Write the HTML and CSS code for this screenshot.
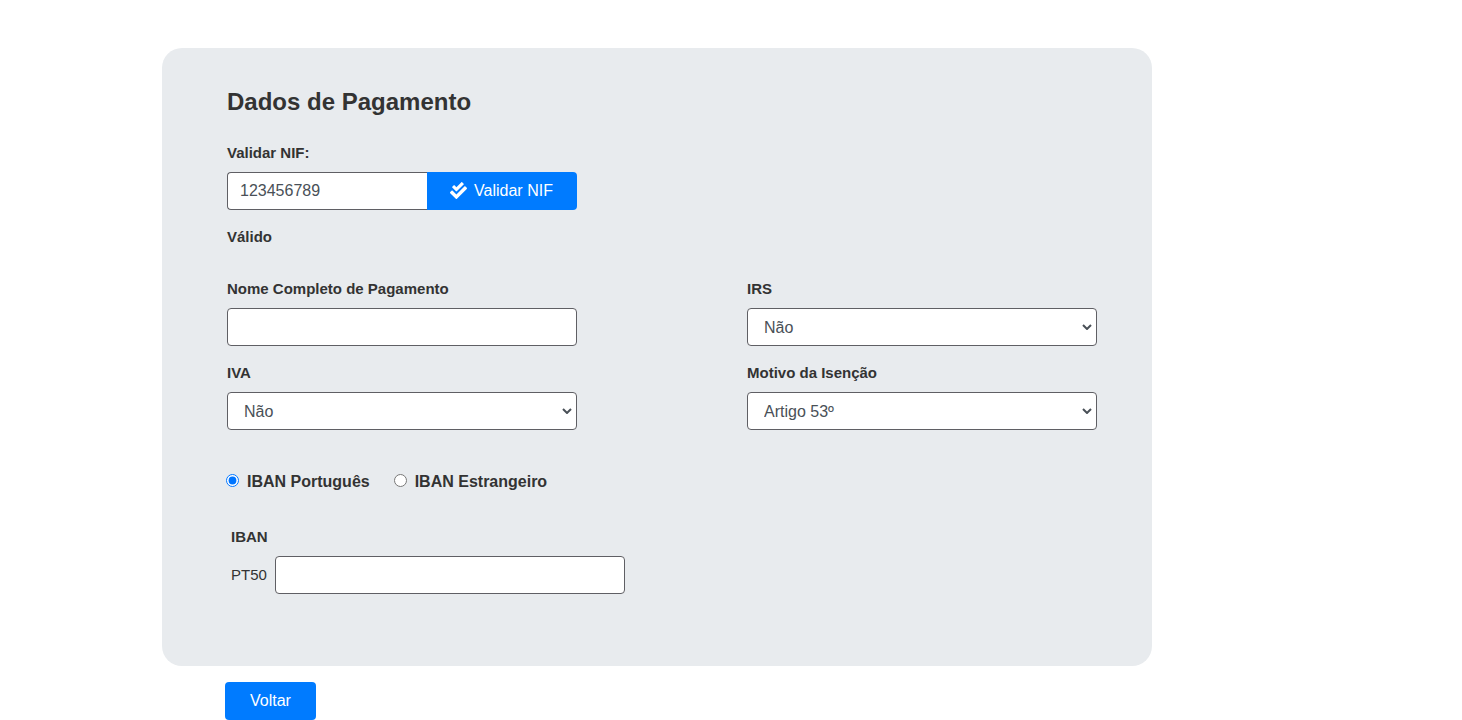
FILE: index.html
```html
<!DOCTYPE html>
<html lang="pt">
<head>
<meta charset="utf-8">
<title>Dados de Pagamento</title>
<link rel="stylesheet" href="styles.css">
</head>
<body>
<main class="page">
  <section class="card">
    <h1 class="title">Dados de Pagamento</h1>
    <div class="field nif">
      <label class="label" for="nif">Validar NIF:</label>
      <div class="input-group">
        <input class="control nif-input" id="nif" type="text" value="123456789">
        <button class="btn btn-validate" type="button">
          <svg class="icon" viewBox="0 0 512 512" aria-hidden="true"><path fill="currentColor" d="M505 174.8l-39.6-39.6c-9.4-9.4-24.6-9.4-33.9 0L192 374.7 80.6 263.2c-9.4-9.4-24.6-9.4-33.9 0L7 302.9c-9.4 9.4-9.4 24.6 0 34L175 505c9.4 9.4 24.6 9.4 33.9 0l296-296.2c9.4-9.5 9.4-24.7.1-34zm-324.3 106c6.2 6.3 16.4 6.3 22.6 0l208-208.2c6.2-6.3 6.2-16.4 0-22.6L366.1 4.7c-6.2-6.3-16.4-6.3-22.6 0L192 156.2l-55.4-55.5c-6.2-6.3-16.4-6.3-22.6 0L68.7 146c-6.2 6.3-6.2 16.4 0 22.6l112 112.2z"/></svg>
          <span>Validar NIF</span>
        </button>
      </div>
    </div>
    <div class="label status">Válido</div>
    <div class="grid">
      <div class="field">
        <label class="label" for="nome">Nome Completo de Pagamento</label>
        <input class="control" id="nome" type="text">
      </div>
      <div class="field">
        <label class="label" for="irs">IRS</label>
        <select class="control" id="irs"><option>Não</option></select>
      </div>
      <div class="field">
        <label class="label" for="iva">IVA</label>
        <select class="control" id="iva"><option>Não</option></select>
      </div>
      <div class="field">
        <label class="label" for="motivo">Motivo da Isenção</label>
        <select class="control" id="motivo"><option>Artigo 53º</option></select>
      </div>
    </div>
    <div class="radios">
      <label class="radio"><input type="radio" name="tipo" checked><span>IBAN Português</span></label>
      <label class="radio"><input type="radio" name="tipo"><span>IBAN Estrangeiro</span></label>
    </div>
    <div class="field iban">
      <label class="label" for="iban">IBAN</label>
      <div class="iban-row">
        <span class="prefix">PT50</span>
        <input class="control" id="iban" type="text">
      </div>
    </div>
  </section>
  <button class="btn btn-back" type="button">Voltar</button>
</main>
</body>
</html>
```
FILE: styles.css
```css
* { box-sizing: border-box; }

body {
  margin: 0;
  background: #fff;
  color: #333;
  font-family: "Liberation Sans", Arial, sans-serif;
  font-size: 15px;
  line-height: 24px;
  overflow: hidden;
}

.page { padding: 48px 0 0 162px; }

.card {
  width: 990px;
  height: 618px;
  padding: 40px 55px 0 65px;
  border-radius: 20px;
  background: #e8ebee;
}

.title {
  margin: 0 0 25px;
  font-size: 24px;
  line-height: 28px;
}

.field { display: flex; flex-direction: column; gap: 7px; }

.label { font-weight: bold; line-height: 24px; }

.control {
  width: 350px;
  height: 38px;
  padding: 6px 12px;
  border: 1px solid #5f5f64;
  border-radius: 4px;
  background: #fff;
  color: #495057;
  font: 16px/24px "Liberation Sans", Arial, sans-serif;
}

select.control {
  appearance: none;
  padding: 7px 24px 5px 16px;
  background: #fff url("data:image/svg+xml,%3Csvg xmlns='http://www.w3.org/2000/svg' viewBox='0 0 10 6'%3E%3Cpath d='M1 1l4 4 4-4' fill='none' stroke='%23495057' stroke-width='2'/%3E%3C/svg%3E") no-repeat right 4px top 15px / 10px 6px;
}

.input-group { display: flex; }

.nif-input {
  width: 200px;
  border-right: 0;
  border-radius: 4px 0 0 4px;
}

.btn {
  display: flex;
  align-items: center;
  justify-content: center;
  height: 38px;
  padding: 0;
  border: 0;
  border-radius: 4px;
  background: #007bff;
  color: #fff;
  font: 16px/24px "Liberation Sans", Arial, sans-serif;
}

.btn-validate { width: 150px; gap: 7px; padding-right: 1px; border-radius: 0 4px 4px 0; }

.icon { width: 17px; height: 17px; margin-bottom: 1px; }

.status { margin-top: 15px; }

.grid {
  display: grid;
  grid-template-columns: 350px 350px;
  column-gap: 170px;
  row-gap: 15px;
  margin-top: 28px;
}

.radios {
  display: flex;
  gap: 24px;
  margin: 40px 0 0 -1px;
}

.radio {
  display: flex;
  align-items: center;
  gap: 8px;
  font-size: 16px;
  font-weight: bold;
}

.radio input { width: 13px; height: 13px; margin: 0 0 3px; }

.iban { margin: 31px 0 0 4px; }

.iban-row { display: flex; align-items: center; gap: 8px; }

.prefix { width: 36px; }

.btn-back { width: 91px; margin: 16px 0 0 63px; }
```
